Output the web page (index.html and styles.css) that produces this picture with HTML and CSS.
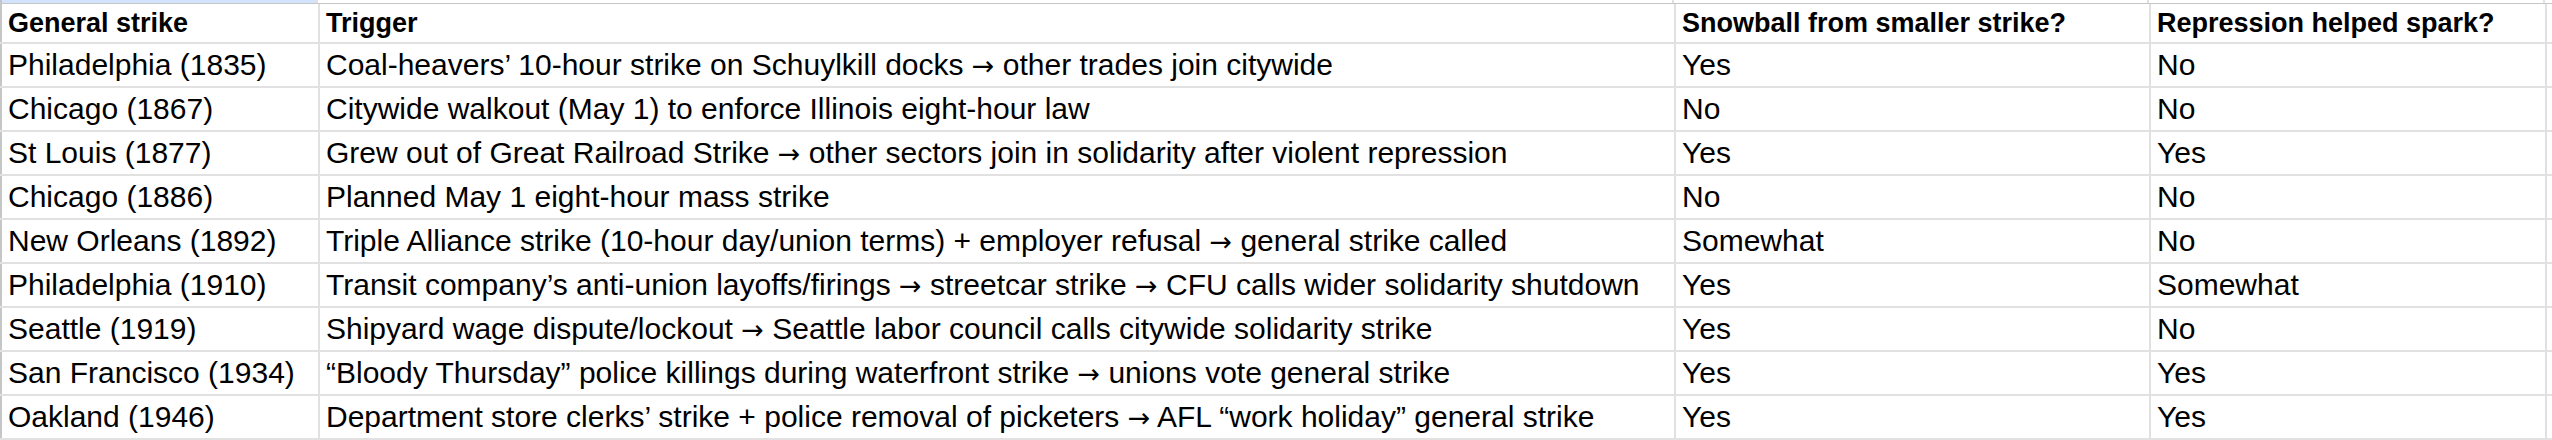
FILE: index.html
```html
<!DOCTYPE html>
<html lang="en">
<head>
<meta charset="utf-8">
<title>General strikes</title>
<link rel="stylesheet" href="styles.css">
</head>
<body>
<div class="sheet">
  <div class="colheads">
    <div class="ch ch-a sel"></div>
    <div class="ch ch-b"></div>
    <div class="ch ch-c"></div>
    <div class="ch ch-d"></div>
    <div class="ch ch-e"></div>
  </div>
  <table class="grid">
    <colgroup>
      <col class="c1"><col class="c2"><col class="c3"><col class="c4"><col class="c5">
    </colgroup>
    <tr class="r head">
      <td>General strike</td><td>Trigger</td><td>Snowball from smaller strike?</td><td>Repression helped spark?</td><td></td>
    </tr>
    <tr class="r">
      <td>Philadelphia (1835)</td><td>Coal-heavers’ 10-hour strike on Schuylkill docks <span class="arr">→</span> other trades join citywide</td><td>Yes</td><td>No</td><td></td>
    </tr>
    <tr class="r">
      <td>Chicago (1867)</td><td>Citywide walkout (May 1) to enforce Illinois eight-hour law</td><td>No</td><td>No</td><td></td>
    </tr>
    <tr class="r">
      <td>St Louis (1877)</td><td>Grew out of Great Railroad Strike <span class="arr">→</span> other sectors join in solidarity after violent repression</td><td>Yes</td><td>Yes</td><td></td>
    </tr>
    <tr class="r">
      <td>Chicago (1886)</td><td>Planned May 1 eight-hour mass strike</td><td>No</td><td>No</td><td></td>
    </tr>
    <tr class="r">
      <td>New Orleans (1892)</td><td>Triple Alliance strike (10-hour day/union terms) + employer refusal <span class="arr">→</span> general strike called</td><td>Somewhat</td><td>No</td><td></td>
    </tr>
    <tr class="r">
      <td>Philadelphia (1910)</td><td>Transit company’s anti-union layoffs/firings <span class="arr">→</span> streetcar strike <span class="arr">→</span> CFU calls wider solidarity shutdown</td><td>Yes</td><td>Somewhat</td><td></td>
    </tr>
    <tr class="r">
      <td>Seattle (1919)</td><td>Shipyard wage dispute/lockout <span class="arr">→</span> Seattle labor council calls citywide solidarity strike</td><td>Yes</td><td>No</td><td></td>
    </tr>
    <tr class="r">
      <td>San Francisco (1934)</td><td>“Bloody Thursday” police killings during waterfront strike <span class="arr">→</span> unions vote general strike</td><td>Yes</td><td>Yes</td><td></td>
    </tr>
    <tr class="r">
      <td>Oakland (1946)</td><td>Department store clerks’ strike + police removal of picketers <span class="arr">→</span> AFL “work holiday” general strike</td><td>Yes</td><td>Yes</td><td></td>
    </tr>
  </table>
</div>
</body>
</html>
```

FILE: styles.css
```css
html, body {
  margin: 0;
  padding: 0;
  background: #ffffff;
}

.sheet {
  width: 2552px;
  height: 440px;
  overflow: hidden;
  font-family: "Liberation Sans", Arial, Helvetica, sans-serif;
  color: #000000;
}

.colheads {
  display: flex;
  height: 3px;
  border-bottom: 1px solid #c4c7c5;
}

.ch { height: 3px; background: #ffffff; border-right: 2px solid #e1e1e1; box-sizing: border-box; }
.ch.sel { background: #d3e3fd; }
.ch-a { width: 318px; border-left: 2px solid #c4c7c5; }
.ch-b { width: 1356px; }
.ch-c { width: 475px; }
.ch-d { width: 396px; }
.ch-e { width: 7px; border-right: none; }

.grid {
  border-collapse: collapse;
  table-layout: fixed;
  width: 2552px;
}

.c1 { width: 318px; }
.c2 { width: 1356px; }
.c3 { width: 475px; }
.c4 { width: 396px; }
.c5 { width: 7px; }

.grid td {
  padding: 0 6px;
  border-right: 2px solid #e1e1e1;
  border-bottom: 2px solid #e1e1e1;
  font-size: 30px;
  line-height: 34px;
  height: 42px;
  white-space: nowrap;
  overflow: hidden;
  vertical-align: middle;
}

.grid td:first-child {
  border-left: 2px solid #c4c7c5;
}

.grid td:last-child {
  border-right: none;
  padding: 0;
}

.arr {
  font-family: "DejaVu Sans", sans-serif;
  font-size: 27px;
}

.r.head td {
  height: 38px;
  font-size: 27px;
  line-height: 32px;
  font-weight: bold;
}
```
